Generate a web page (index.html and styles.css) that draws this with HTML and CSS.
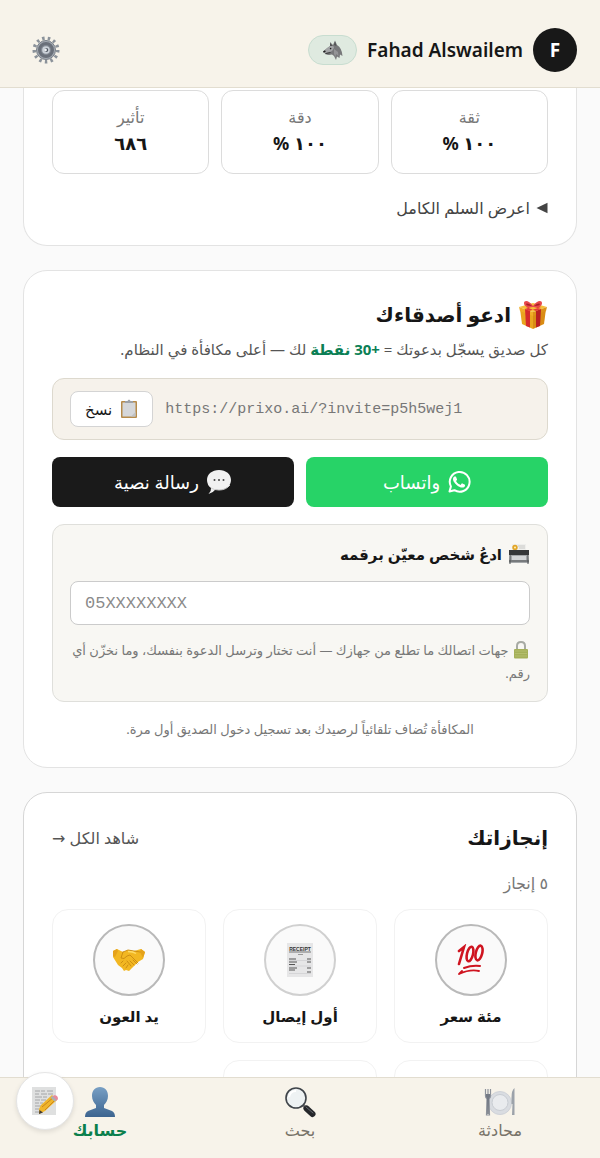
FILE: index.html
```html
<!DOCTYPE html>
<html lang="ar" dir="rtl">
<head>
<meta charset="utf-8">
<meta name="viewport" content="width=device-width, initial-scale=1">
<title>حسابك</title>
<link rel="stylesheet" href="styles.css">
</head>
<body>
<div class="app">
  <header class="topbar">
    <div class="user">
      <span class="avatar">F</span>
      <span class="user-name" dir="ltr">Fahad Alswailem</span>
      <span class="badge">
        <svg width="22" height="22" viewBox="0 0 22 22" aria-hidden="true">
          <path d="M1 12.500Q5 9 8 7V3l3 3 2-4.500L15 6q5 3 5.500 11L18 15.500 17.500 19 15 17.500 14 21l-2-4-2-1.500q-4 1-6.500-.5z" fill="#77787a"/>
          <path d="M1 12.500Q5 9 8 7q3-1 4 1-1 5-5 5l-4 1z" fill="#a2a3a5"/>
          <path d="m8 7 .2-3 2.300 3zm4-1 1-3.500L14.500 7z" fill="#505153"/>
          <path d="m12 10 4 3 .5 4-2.500-2-.5 3-1.500-3z" fill="#939496"/>
          <circle cx="8.600" cy="9.600" r=".8" fill="#1c1c1c"/><path d="m1 12.500 2-1.200.8 1.200-2 1.200z" fill="#1c1c1c"/><path d="m3.500 14.700 5-1.200" stroke="#2c2c2c" stroke-width=".8"/>
        </svg>
      </span>
    </div>
    <button class="icon-button" type="button" aria-label="الإعدادات">
      <svg width="28" height="28" viewBox="0 0 28 28" aria-hidden="true">
        <circle cx="14" cy="14" r="11.800" fill="none" stroke="#8b929a" stroke-width="3.400" stroke-dasharray="2.500 3.203"/>
        <circle cx="14" cy="14" r="9.500" fill="#a5abb3" stroke="#787f88"/>
        <circle cx="14" cy="14" r="6.500" fill="#858c96" stroke="#6a707a" stroke-width="3"/>
        <circle cx="14" cy="14" r="3.800" fill="#cdd3da"/>
        <circle cx="14.300" cy="14" r="2" fill="#4e5560"/><circle cx="13.500" cy="14" r="1.400" fill="#eef1f4"/>
      </svg>
    </button>
  </header>

  <main class="content">
    <section class="card card-stats">
      <dl class="stats">
        <div class="stat"><dt>ثقة</dt><dd>١٠٠ %</dd></div>
        <div class="stat"><dt>دقة</dt><dd>١٠٠ %</dd></div>
        <div class="stat"><dt>تأثير</dt><dd>٦٨٦</dd></div>
      </dl>
      <button class="toggle" type="button">
        <svg width="12" height="12" viewBox="0 0 12 12" aria-hidden="true"><path d="M.5 6 11.500 .8v10.400z" fill="#444"/></svg>
        اعرض السلم الكامل
      </button>
    </section>

    <section class="card">
      <h2 class="title">
        <svg width="30" height="30" viewBox="0 0 30 30" aria-hidden="true">
          <path d="m2 9 13 4v16L4 24z" fill="#e9a51f"/><path d="m28 9-13 4v16l11-5z" fill="#d98c14"/>
          <path d="m1 7 14-4 14 4-14 5z" fill="#f6bf3c"/><path d="m1 7 14 5v4L2 11z" fill="#f0ad28"/><path d="m29 7-14 5v4l13-5z" fill="#dc9219"/>
          <path d="m7 9 5 2v16.500L8 26z" fill="#d52b2b"/><path d="m23 9-5 2v16.500l4-1.500z" fill="#b91f22"/>
          <path d="m7 9 12-4 4 2-12 4zM23 9 10 5 8 7l10 4z" fill="#e33a38"/>
          <path d="M15 6C11 0 6 0 6 3s3 5 9 4c6 1 9-1 9-4s-5-3-9 3z" fill="#e8494c"/><path d="M14 6c-3-3-6-3-6-2s2 2 6 2m2 0c3-3 6-3 6-2s-2 2-6 2" fill="#a81f27"/>
        </svg>
        ادعو أصدقاءك
      </h2>
      <p class="lead">كل صديق يسجّل بدعوتك = <strong>+30 نقطة</strong> لك — أعلى مكافأة في النظام.</p>

      <div class="invite-link">
        <span class="url" dir="ltr">https://prixo.ai/?invite=p5h5wej1</span>
        <button class="copy" type="button">
          <svg width="18" height="20" viewBox="0 0 18 20" aria-hidden="true">
            <rect x="1" y="2" width="16" height="17" rx="1" fill="#b68b4b"/><path d="M2.500 3.500h13v14h-13z" fill="#d5d7da"/><path d="M5 4V2h2.500q1.500-3 3 0H13v2z" fill="#9da1a7"/><path d="M11 17.500h4.500V13z" fill="#bfc2c5"/>
          </svg>
          نسخ
        </button>
      </div>

      <div class="share">
        <button class="share-button whatsapp" type="button">
          <svg width="24" height="24" viewBox="0 0 24 24" fill="#fff" aria-hidden="true">
            <path d="M17.472 14.382c-.297-.149-1.758-.867-2.030-.967-.273-.099-.471-.148-.67.150-.197.297-.767.966-.940 1.164-.173.199-.347.223-.644.075-.297-.150-1.255-.463-2.390-1.475-.883-.788-1.480-1.761-1.653-2.059-.173-.297-.018-.458.130-.606.134-.133.298-.347.446-.520.149-.174.198-.298.298-.497.099-.198.050-.371-.025-.520-.075-.149-.669-1.612-.916-2.207-.242-.579-.487-.500-.669-.510-.173-.008-.371-.010-.570-.010-.198 0-.520.074-.792.372-.272.297-1.040 1.016-1.040 2.479 0 1.462 1.065 2.875 1.213 3.074.149.198 2.096 3.200 5.077 4.487.709.306 1.262.489 1.694.625.712.227 1.360.195 1.871.118.571-.085 1.758-.719 2.006-1.413.248-.694.248-1.289.173-1.413-.074-.124-.272-.198-.570-.347z"/>
            <path d="M2.500 21.500 3.900 16.400A9.900 9.900 0 1 1 7.400 20.200z" fill="none" stroke="#fff" stroke-width="2" stroke-linejoin="round"/>
          </svg>
          واتساب
        </button>
        <button class="share-button sms" type="button">
          <svg width="26" height="26" viewBox="0 0 26 26" aria-hidden="true">
            <path d="M13 1c7 0 12 4.200 12 10s-5 10-12 10q-2 0-3.500-.4Q7 24 2.500 25q3-3 2.500-6-4-3-4-8C1 5.200 6 1 13 1" fill="#f1f1f1"/>
            <path d="M5 19q3 2 8 2 7 0 11-5" fill="none" stroke="#cfcfcf"/>
            <circle cx="8.500" cy="11" r="1" fill="#444"/><circle cx="13" cy="11" r="1" fill="#444"/><circle cx="17.500" cy="11" r="1" fill="#444"/>
          </svg>
          رسالة نصية
        </button>
      </div>

      <div class="direct">
        <label class="direct-label" for="phone">
          <svg width="22" height="22" viewBox="0 0 22 22" aria-hidden="true">
            <path d="M4 1h14v8H4z" fill="#efefec"/><path d="M10 3h7M11 5h6" stroke="#c9c9c6"/><circle cx="7" cy="4.500" r="2.700" fill="#e2a526"/><circle cx="7" cy="4.500" r="1" fill="#fff0b5"/>
            <path d="M1 7h20v5H1z" fill="#363839"/><path d="M2 12h18l1 8H1z" fill="#a5a8aa"/><path d="M4 13h14v4H4z" fill="#d4d6d7"/><path d="M2 12v9m18-9v9M1 18h20" stroke="#4b4e50"/>
          </svg>
          ادعُ شخص معيّن برقمه
        </label>
        <input class="phone" id="phone" type="tel" dir="ltr" placeholder="05XXXXXXXX">
        <p class="privacy"><svg width="18" height="18" viewBox="-1 0 18 18" aria-hidden="true"><path d="M4 9V5q0-4 4-4t4 4v4" fill="none" stroke="#a7aaa3" stroke-width="2"/><rect x="1" y="8" width="14" height="9.500" rx="1" fill="#a5b058"/><path d="M2 10h12M2 12.500h12M2 15h12" stroke="#b4be6c"/></svg> جهات اتصالك ما تطلع من جهازك — أنت تختار وترسل الدعوة بنفسك، وما نخزّن أي رقم.</p>
      </div>
      <p class="note">المكافأة تُضاف تلقائياً لرصيدك بعد تسجيل دخول الصديق أول مرة.</p>
    </section>

    <section class="card card-last">
      <div class="section-head">
        <h2 class="title">إنجازاتك</h2>
        <a class="see-all" href="#all">شاهد الكل →</a>
      </div>
      <p class="count">٥ إنجاز</p>
      <ul class="achievements">
        <li class="tile">
          <span class="medal">
            <svg width="30" height="32" viewBox="0 0 30 32" fill="none" stroke="#cf1420" stroke-linecap="round" aria-hidden="true">
              <path d="m3 7 5-4L3 20" stroke-width="2.600"/><ellipse cx="14" cy="10" rx="3" ry="7.500" transform="rotate(14 14 10)" stroke-width="2.600"/><ellipse cx="23" cy="9" rx="3.200" ry="7.500" transform="rotate(14 23 9)" stroke-width="2.600"/>
              <path d="M8 24q8-3 16-2" stroke-width="2"/><path d="M3 30q11-5 20-3M3 30l3-3" stroke-width="1.800"/>
            </svg>
          </span>
          <span class="tile-name">مئة سعر</span>
        </li>
        <li class="tile">
          <span class="medal medal-faded">
            <svg width="26" height="34" viewBox="0 0 26 34" aria-hidden="true">
              <path d="M0 0h26v34H0z" fill="#e6e6e7"/><text x="13" y="7.500" text-anchor="middle" class="receipt-text">RECEIPT</text>
              <path d="M2 9h22" stroke="#777"/><path d="M11 11.500h5" stroke="#999"/>
              <path d="M2 16h7m11 0h4M2 19h8m10 0h4M2 21.500h6M2 25h8m10 0h4M2 27h6m12 2h4" stroke="#555"/><path d="M2 17.500h22M2 23h22M2 30.500h22" stroke="#c9c9cc" stroke-width=".6"/>
            </svg>
          </span>
          <span class="tile-name">أول إيصال</span>
        </li>
        <li class="tile">
          <span class="medal">
            <svg width="34" height="24" viewBox="0 0 34 24" aria-hidden="true">
              <path d="M1 3 5 1l6 3 5-2 6 1 7-2 4 3-2 7-5 3-6 6-3 3-3-1-2 1-2-3-4-3L1 9z" fill="#f2b722"/>
              <path d="M1 3 5 1l1 2-3 6-2-1zm28-2 4 3-2 6-3-6z" fill="#e5a21a"/>
              <path d="m11 4-2 6q3 2 6-2l3-1 8 8m-5-3 4 4m-7-3 4 4m-7-4 4 5M9 15l2-2m0 5 3-3m0 5 2-3M11 4l5-2 12 2" fill="none" stroke="#c98a12" stroke-width=".9" stroke-linecap="round"/>
              <path d="M16 3.500q5 0 8 2" fill="none" stroke="#ffdc67" stroke-width="1.500"/>
            </svg>
          </span>
          <span class="tile-name">يد العون</span>
        </li>
        <li class="tile"></li>
        <li class="tile"></li>
      </ul>
    </section>
  </main>

  <nav class="tabs">
    <a class="tab" href="#chat">
      <svg width="32" height="32" viewBox="0 0 32 32" aria-hidden="true">
        <circle cx="16" cy="17" r="11.500" fill="#d9dce1" stroke="#cfd2d8"/><circle cx="16" cy="16.500" r="8" fill="#e9ebee" stroke="#c8ccd2"/>
        <path d="M1.500 3v7q0 2 1.500 2.500L2.500 29h3L5 12.500Q6.500 12 6.500 10V3M4 3v8" fill="none" stroke="#8d929b" stroke-width="1.200"/><path d="M2 8h4v3l-1 2-.2 15H3.200L3 13 2 11z" fill="#747a85"/>
        <path d="M30.500 2q-3 2-3 10v6h1l-.5 11h2.500z" fill="#9ca2aa"/>
      </svg>
      <span>محادثة</span>
    </a>
    <a class="tab" href="#search">
      <svg width="32" height="32" viewBox="0 0 32 32" aria-hidden="true">
        <path d="m19 19 4 4" stroke="#777" stroke-width="3"/><path d="m22.500 22.500 6 5.500" stroke="#25272b" stroke-width="6" stroke-linecap="round"/><path d="m22 21 7 6" stroke="#666a70" stroke-linecap="round"/>
        <circle cx="12" cy="12" r="10" fill="#eef2f3" stroke="#3f444a" stroke-width="1.600"/><path d="M5 11q1-6 7-6" fill="none" stroke="#fff" stroke-width="2"/>
      </svg>
      <span>بحث</span>
    </a>
    <a class="tab tab-active" href="#account" aria-current="page">
      <svg width="32" height="32" viewBox="0 0 32 32" aria-hidden="true">
        <defs><linearGradient id="person" x1="0" y1="0" x2="0" y2="1"><stop offset="0" stop-color="#789fc4"/><stop offset="1" stop-color="#3c6490"/></linearGradient></defs>
        <path d="M16 1c5 0 8 3.500 8 9 0 4-2 7-4 9v3l8 3q3 1.500 3 6H1q0-4.500 3-6l8-3v-3c-2-2-4-5-4-9 0-5.500 3-9 8-9" fill="url(#person)"/>
      </svg>
      <span>حسابك</span>
    </a>
    <button class="fab" type="button" aria-label="ملاحظة جديدة">
      <svg width="26" height="28" viewBox="0 0 26 28" aria-hidden="true">
        <path d="M0 0h24v28H0z" fill="#dfe0e0"/><path d="M3 4h5m1 0h4m2 0h6M3 7h4m2 0h6m1 0h5M3 10h7m1 0h4M3 13h5m1 0h5M3 16h4m1 0h3M3 19h6M3 22h4M3 25h5" stroke="#96989a" stroke-width=".8"/>
        <path d="m7 22 2-4L20 8l5 5-12 11-6 3z" fill="#f0b52b"/><path d="m10 20 12-10m-9 13L24 12" stroke="#cc861b"/><path d="m20 10 2-1.800q4-.5 4 4L24 14z" fill="#e98a9b"/><path d="m18.500 10.500 2-1.500 4 4-2 1.500z" fill="#a9b0b3"/><path d="m7 27 .5-4 3.500 2.500z" fill="#443c32"/>
      </svg>
    </button>
  </nav>
</div>
</body>
</html>
```
FILE: styles.css
```css
* { box-sizing: border-box; }

body {
  margin: 0;
  background: #fafafa;
  color: #161616;
  font-family: "Noto Sans", "DejaVu Sans", sans-serif;
}

h2, p, dl, dd, ul { margin: 0; padding: 0; }
ul { list-style: none; }
button, input { font: inherit; color: inherit; }
button { cursor: pointer; }
svg { flex: none; }

.app {
  display: flex;
  flex-direction: column;
  height: 100vh;
}

.topbar {
  display: flex;
  flex: none;
  align-items: center;
  justify-content: space-between;
  padding: 28px 23px 15px 32px;
  border-bottom: 1px solid #e2ddd0;
  background: #f7f3ea;
}

.user { display: flex; align-items: center; gap: 10px; }

.avatar {
  display: grid;
  place-items: center;
  width: 44px;
  height: 44px;
  border-radius: 50%;
  background: #181818;
  color: #fff;
  font-size: 19px;
  font-weight: 700;
}

.user-name { font-size: 19px; font-weight: 600; line-height: 28px; }

.badge {
  display: grid;
  place-items: center;
  width: 49px;
  height: 30px;
  border: 1px solid #c8ddd0;
  border-radius: 15px;
  background: #dfeae0;
}

.icon-button {
  display: grid;
  padding: 0;
  border: 0;
  background: none;
}

.content {
  display: flex;
  flex: 1;
  flex-direction: column;
  gap: 24px;
  min-height: 0;
  padding: 0 23px;
  overflow-y: auto;
  scrollbar-width: none;
}

.card {
  flex: none;
  padding: 26px 28px;
  border: 1px solid #e3e3e3;
  border-radius: 24px;
  background: #fff;
}

.card-stats {
  padding-top: 2px;
  padding-bottom: 23px;
  border-top: 0;
  border-radius: 0 0 24px 24px;
}

.card-last { border-color: #d6d6d6; }

.stats {
  display: grid;
  grid-template-columns: repeat(3, 1fr);
  gap: 12px;
}

.stat {
  padding: 14px 8px 16px;
  border: 1px solid #dcdcdc;
  border-radius: 12px;
  text-align: center;
}

.stat dt { color: #777; font-size: 16px; line-height: 24px; }
.stat dd { font-size: 18px; font-weight: 700; line-height: 28px; }

.toggle {
  display: flex;
  align-items: center;
  gap: 6px;
  margin-top: 20px;
  padding: 0;
  border: 0;
  background: none;
  color: #444;
  font-size: 16px;
  line-height: 28px;
}

.title {
  display: flex;
  align-items: center;
  gap: 7px;
  font-size: 20px;
  font-weight: 700;
  line-height: 36px;
}

.lead {
  margin: 2px 0 15px;
  color: #555;
  font-size: 15px;
  line-height: 28px;
}

.lead strong { color: #0b7f55; }

.invite-link {
  display: flex;
  align-items: center;
  gap: 12px;
  padding: 12px 17px;
  border: 1px solid #ddd9ce;
  border-radius: 12px;
  background: #f6f2eb;
}

.url {
  flex: 1;
  min-width: 0;
  overflow: hidden;
  color: #777;
  font-family: "Liberation Mono", "DejaVu Sans Mono", monospace;
  font-size: 15px;
  text-overflow: ellipsis;
  white-space: nowrap;
}

.copy {
  display: flex;
  align-items: center;
  justify-content: center;
  gap: 8px;
  height: 36px;
  padding: 0 14px;
  border: 1px solid #d4d4d4;
  border-radius: 8px;
  background: #fff;
  font-size: 15px;
}

.share {
  display: grid;
  grid-template-columns: 1fr 1fr;
  gap: 12px;
  margin: 17px 0;
}

.share-button {
  display: flex;
  align-items: center;
  justify-content: center;
  gap: 7px;
  height: 50px;
  border: 0;
  border-radius: 8px;
  color: #fff;
  font-size: 18px;
}

.whatsapp { background: #27d367; }
.sms { background: #1a1a1a; }

.direct {
  display: flex;
  flex-direction: column;
  padding: 15px 17px 16px;
  border: 1px solid #dfdfdb;
  border-radius: 12px;
  background: #f8f7f3;
}

.direct-label {
  display: flex;
  align-items: center;
  gap: 6px;
  font-size: 15px;
  font-weight: 600;
  line-height: 28px;
}

.phone {
  width: 100%;
  height: 44px;
  margin: 13px 0 14px;
  padding: 0 14px;
  border: 1px solid #cbcbcb;
  border-radius: 8px;
  background: #fff;
  font-family: "Liberation Mono", "DejaVu Sans Mono", monospace;
  font-size: 17px;
}

.phone::placeholder { color: #8a8a8a; opacity: 1; }

.privacy { color: #777; font-size: 13px; line-height: 23px; }
.privacy svg { vertical-align: text-bottom; }

.note {
  margin-top: 15px;
  color: #777;
  font-size: 13px;
  line-height: 24px;
  text-align: center;
}

.section-head {
  display: flex;
  align-items: center;
  justify-content: space-between;
}

.see-all { color: #555; font-size: 16px; line-height: 38px; text-decoration: none; }

.count {
  margin: 12px 0;
  color: #777;
  font-size: 16px;
  line-height: 28px;
}

.achievements {
  display: grid;
  grid-template-columns: repeat(3, 1fr);
  gap: 17px;
}

.tile {
  display: flex;
  flex-direction: column;
  align-items: center;
  gap: 8px;
  min-height: 134px;
  padding: 14px 8px;
  border: 1px solid #f2f2f2;
  border-radius: 16px;
}

.medal {
  display: grid;
  place-items: center;
  width: 72px;
  height: 72px;
  border: 2px solid #b9b9b9;
  border-radius: 50%;
  background: #fafafa;
}

.medal-faded { border-color: #d0d0d0; }
.receipt-text { fill: #333; font: 700 5px "Liberation Sans", sans-serif; }
.tile-name { font-size: 15px; font-weight: 600; line-height: 24px; }

.tabs {
  position: relative;
  display: grid;
  flex: none;
  grid-template-columns: repeat(3, 1fr);
  padding: 8px 0 16px;
  border-top: 1px solid #e2ddd0;
  background: #f7f3ea;
}

.tab {
  display: flex;
  flex-direction: column;
  align-items: center;
  color: #777268;
  font-size: 16px;
  line-height: 24px;
  text-decoration: none;
}

.tab-active { color: #0b7f4c; font-weight: 600; }

/* Floating action button overlapping the tab bar edge */
.fab {
  position: absolute;
  top: -6px;
  left: 16px;
  display: grid;
  place-items: center;
  width: 58px;
  height: 58px;
  padding: 0;
  border: 1px solid #e5e5e5;
  border-radius: 50%;
  background: #fff;
  box-shadow: 0 2px 5px rgb(0 0 0 / 10%);
}
```
